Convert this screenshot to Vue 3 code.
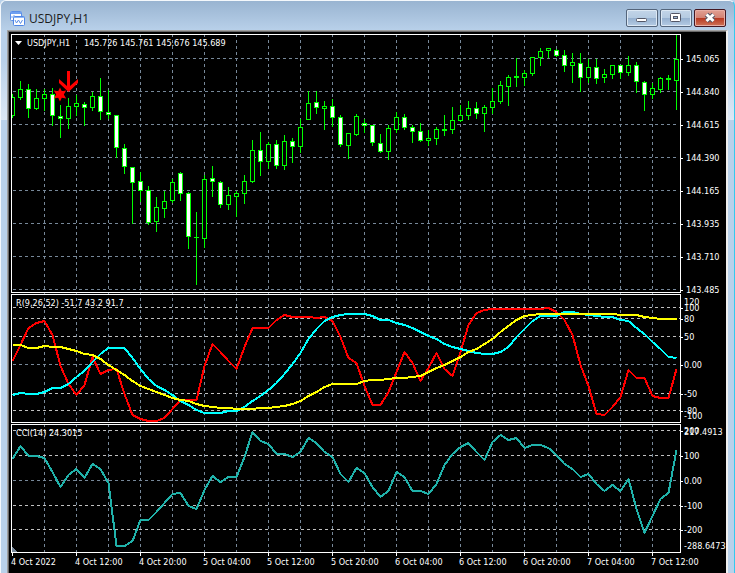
<script setup>
// Each bar: [high, open/close top, open/close bottom, low, falling]
const bars = [
  [94, 97, 115, 117, 0], [81, 89, 97, 99, 0], [84, 89, 108, 117, 1], [89, 98, 108, 109, 0],
  [89, 94, 98, 110, 0], [88, 94, 115, 125, 1], [105, 116, 118, 137, 1], [98, 106, 118, 128, 0],
  [95, 103, 106, 115, 0], [102, 104, 107, 125, 1], [92, 96, 107, 110, 0], [78, 96, 111, 119, 1],
  [90, 112, 114, 118, 1], [115, 115, 147, 157, 1], [144, 148, 166, 173, 1], [167, 167, 182, 223, 1],
  [172, 181, 190, 201, 1], [186, 190, 222, 224, 1], [197, 207, 221, 231, 0], [191, 201, 208, 217, 0],
  [179, 182, 200, 202, 0], [172, 173, 193, 200, 1], [192, 193, 236, 248, 1], [212, 237, 237, 284, 0],
  [175, 179, 238, 247, 0], [166, 178, 181, 196, 1], [181, 182, 204, 207, 1], [187, 195, 204, 209, 0],
  [191, 193, 196, 216, 0], [175, 181, 193, 203, 0], [140, 150, 181, 182, 0], [132, 150, 161, 175, 1],
  [142, 144, 161, 168, 0], [140, 144, 165, 168, 1], [135, 141, 165, 169, 0], [138, 141, 146, 162, 1],
  [119, 127, 146, 152, 0], [91, 103, 119, 119, 0], [91, 102, 107, 113, 1], [101, 106, 108, 129, 0],
  [99, 106, 117, 126, 1], [115, 117, 144, 146, 1], [133, 133, 145, 158, 0], [114, 116, 134, 135, 0],
  [119, 123, 125, 132, 1], [125, 125, 142, 145, 1], [134, 143, 151, 152, 1], [125, 128, 151, 159, 0],
  [112, 117, 129, 132, 0], [114, 117, 127, 129, 1], [125, 127, 131, 142, 1], [123, 131, 140, 141, 1],
  [130, 138, 140, 145, 0], [127, 129, 138, 144, 0], [115, 129, 130, 135, 0], [107, 120, 129, 133, 0],
  [105, 115, 120, 121, 0], [101, 108, 115, 119, 0], [102, 108, 113, 118, 1], [105, 107, 113, 131, 0],
  [88, 101, 107, 113, 0], [81, 85, 101, 103, 0], [75, 77, 86, 105, 0], [58, 76, 77, 86, 0],
  [70, 73, 77, 85, 0], [57, 57, 73, 75, 0], [48, 51, 57, 65, 0], [48, 48, 50, 57, 0],
  [49, 50, 55, 56, 1], [50, 55, 65, 71, 1], [53, 62, 65, 82, 0], [53, 63, 77, 91, 1],
  [59, 67, 77, 82, 0], [59, 67, 78, 83, 1], [69, 74, 77, 82, 0], [65, 65, 74, 78, 0],
  [65, 65, 72, 78, 1], [56, 65, 72, 75, 0], [62, 65, 81, 92, 1], [81, 82, 94, 110, 1],
  [83, 88, 94, 98, 0], [77, 78, 89, 92, 0], [75, 78, 79, 89, 0], [35, 59, 80, 109, 0]
]

const fast = [
  361, 345, 328, 323, 321, 335, 366, 384, 395, 385, 357, 374, 370, 369, 394, 415, 419, 421, 421, 418,
  409, 400, 400, 400, 366, 344, 352, 361, 369, 347, 328, 328, 328, 320, 315, 317, 317, 317, 318, 317,
  321, 337, 358, 363, 386, 405, 405, 392, 372, 352, 363, 381, 368, 353, 369, 376, 352, 325, 313, 310,
  309, 309, 309, 309, 309, 309, 309, 308, 312, 320, 335, 365, 386, 414, 415, 407, 397, 370, 378, 378,
  396, 398, 398, 369
]
const medium = [
  395, 393, 394, 394, 392, 388, 388, 384, 377, 371, 362, 354, 348, 348, 348, 358, 369, 379, 386, 390,
  395, 401, 405, 410, 413, 413, 413, 411, 411, 407, 401, 396, 390, 383, 374, 364, 353, 339, 329, 321,
  317, 315, 314, 314, 314, 316, 320, 320, 323, 325, 328, 332, 336, 339, 344, 347, 349, 351, 353, 354,
  354, 352, 347, 337, 329, 321, 316, 316, 316, 312, 312, 314, 315, 316, 317, 317, 320, 321, 328, 334,
  342, 349, 357, 358
]
const slow = [
  345, 345, 348, 348, 346, 347, 347, 349, 351, 354, 355, 359, 365, 370, 375, 381, 386, 389, 392, 395,
  398, 400, 401, 404, 406, 407, 408, 408, 409, 409, 409, 408, 408, 407, 406, 404, 401, 396, 392, 387,
  384, 384, 384, 384, 381, 380, 380, 379, 378, 378, 377, 376, 372, 368, 365, 361, 357, 352, 349, 344,
  339, 332, 326, 320, 316, 315, 314, 314, 314, 314, 314, 314, 314, 314, 314, 314, 315, 315, 315, 317,
  318, 319, 319, 319
]
const cci = [
  459, 446, 456, 456, 458, 472, 487, 475, 469, 478, 464, 469, 483, 546, 546, 541, 520, 520, 512, 503,
  494, 493, 506, 509, 490, 476, 482, 477, 477, 457, 432, 441, 444, 454, 454, 457, 452, 438, 443, 452,
  457, 474, 482, 468, 473, 487, 497, 491, 472, 477, 491, 491, 494, 484, 465, 454, 447, 443, 452, 460,
  442, 435, 440, 438, 448, 445, 445, 448, 455, 464, 469, 477, 474, 484, 491, 485, 491, 479, 509, 533,
  516, 499, 493, 450
]

const barX = (i) => 12 + i * 8
const points = (series) => series.map((y, i) => `${barX(i) + 0.5},${y}`).join(' ')
const columns = Array.from({ length: 20 }, (_, i) => 44 + i * 32)

// Labels: [y, text, is the end of the scale]
const panes = [
  {
    id: 'price', top: 34, height: 260, frame: 259,
    grid: [58, 91, 124, 157, 190, 223, 256, 289], levels: [], lines: [],
    labels: [
      [58, '145.065'], [91, '144.840'], [124, '144.615'], [157, '144.390'],
      [190, '144.165'], [223, '143.935'], [256, '143.710'], [289, '143.485']
    ]
  },
  {
    id: 'range', top: 294, height: 130, frame: 129, title: 'R(9,26,52) -51.7 43.2 91.7',
    grid: [364], levels: [307, 318, 336, 393, 410],
    lines: [['#ff0000', points(fast)], ['#00ffff', points(medium)], ['#ffff00', points(slow)]],
    labels: [
      [301, '120', true], [307, '100'], [318, '80'], [336, '50'],
      [364, '0.00'], [393, '-50'], [410, '-80'], [415, '-100', true]
    ]
  },
  {
    id: 'cci', top: 424, height: 129, frame: 129, title: 'CCI(14) 24.3015',
    grid: [480], levels: [430, 455, 505, 529],
    lines: [['#20b2aa', points(cci)]],
    labels: [
      [430, '200'], [431, '217.4913', true], [455, '100'], [480, '0.00'],
      [505, '-100'], [529, '-200'], [545, '-288.6473', true]
    ]
  }
]

const times = [
  '4 Oct 2022', '4 Oct 12:00', '4 Oct 20:00', '5 Oct 04:00', '5 Oct 12:00', '5 Oct 20:00',
  '6 Oct 04:00', '6 Oct 12:00', '6 Oct 20:00', '7 Oct 04:00', '7 Oct 12:00'
]

const share = (pane, y) => `${((y + 0.5 - pane.top) / pane.height) * 100}%`
</script>

<template>
  <main class="window">
    <header class="titlebar">
      <svg class="app-icon" width="15" height="15" viewBox="0 0 15 15" aria-hidden="true">
        <rect x="0.5" y="0.5" width="11" height="9" rx="1" fill="#fff" stroke="#5b8fe8" />
        <path d="M1 2h10" stroke="#6fa0f0" stroke-width="2" />
        <path d="M2 7V5M4 6V4" stroke="#6fa0f0" />
        <rect x="3.5" y="5.5" width="11" height="9" rx="1" fill="#fff" stroke="#4f86e6" />
        <path d="M4 6.500h10" stroke="#8db6f6" stroke-width="1" />
        <path d="M5 9l1.500 3 2-3 2 3.500 2-3.500" fill="none" stroke="#5b8fe8" />
      </svg>
      <h1 class="caption">USDJPY,H1</h1>
      <div class="controls">
        <button type="button" class="control" aria-label="Minimize">
          <svg width="28" height="14" viewBox="0 0 28 14">
            <rect x="8.500" y="7.500" width="10" height="3" rx="1" fill="#fff" stroke="#535666" />
          </svg>
        </button>
        <button type="button" class="control" aria-label="Maximize">
          <svg width="28" height="14" viewBox="0 0 28 14">
            <rect x="8.500" y="2.500" width="10" height="8" rx="1" fill="#fff" stroke="#535666" />
            <rect x="11.500" y="5.500" width="4" height="2" fill="#9db8d6" stroke="#535666" />
          </svg>
        </button>
        <button type="button" class="control close" aria-label="Close">
          <svg width="28" height="14" viewBox="0 0 28 14">
            <path d="M10.500 3.500l7 6.500M17.500 3.500l-7 6.500" stroke="#535666" stroke-width="5" />
            <path d="M10.500 3.500l7 6.500M17.500 3.500l-7 6.500" stroke="#fff" stroke-width="3" />
          </svg>
        </button>
      </div>
    </header>

    <div class="client">
      <section v-for="pane in panes" :key="pane.id" class="pane" :class="pane.id">
        <div class="plot">
          <svg
            class="canvas"
            :viewBox="`11 ${pane.top} 670 ${pane.height}`"
            preserveAspectRatio="none"
            shape-rendering="crispEdges"
          >
            <g stroke="#778899" stroke-dasharray="3 3">
              <line
                v-for="x in columns" :key="x" :x1="x + 0.5" :x2="x + 0.5"
                :y1="pane.top - ((pane.top - 34) % 6)" :y2="pane.top + pane.height"
              />
              <line v-for="y in pane.grid" :key="y" x1="13" x2="678" :y1="y + 0.5" :y2="y + 0.5" />
            </g>
            <g stroke="#c0c0c0" stroke-dasharray="3 3">
              <line v-for="y in pane.levels" :key="y" x1="13" x2="680" :y1="y + 0.5" :y2="y + 0.5" />
            </g>

            <template v-if="pane.id === 'price'">
              <g v-for="(b, i) in bars" :key="i">
                <rect :x="barX(i)" :y="b[0]" width="1" :height="b[3] - b[0] + 1" fill="#00ff00" />
                <rect :x="barX(i) - 2" :y="b[1]" width="5" :height="b[2] - b[1] + 1" fill="#00ff00" />
                <rect
                  v-if="b[2] - b[1] > 1" :x="barX(i) - 1" :y="b[1] + 1" width="3"
                  :height="b[2] - b[1] - 1" :fill="b[4] ? '#ffffff' : '#000000'"
                />
              </g>
              <g shape-rendering="auto" fill="#ff0000">
                <path d="M67 71h3v15l8-7v4l-9.500 9L59 83v-4l8 7z" />
                <path d="M60 87.500l1.800 3.700 4.400-.7-2.400 4 2.400 4-4.400-.7-1.800 3.700-1.800-3.700-4.400.7 2.400-4-2.400-4 4.400.7z" />
              </g>
            </template>

            <polyline
              v-for="line in pane.lines" :key="line[0]" :points="line[1]"
              fill="none" :stroke="line[0]" stroke-width="2" stroke-linejoin="round"
            />
            <path v-if="pane.id === 'cci'" d="M12 547l5 5h-5z" fill="#778899" />
            <rect
              x="11.5" :y="pane.top + 0.5" width="669" :height="pane.frame - 1"
              fill="none" stroke="#fff"
            />
          </svg>
          <h2 v-if="pane.title" class="heading">{{ pane.title }}</h2>
          <h2 v-else class="heading quote">
            <svg width="7" height="4" viewBox="0 0 7 4" aria-hidden="true"><path d="M0 0h7L3.500 4z" fill="#fff" /></svg>
            <span class="symbol">USDJPY,H1</span>
            <span>145.726 145.761 145.676 145.689</span>
          </h2>
        </div>
        <div class="axis">
          <span
            v-for="label in pane.labels" :key="label[1]" class="mark" :class="{ bound: label[2] }"
            :style="{ top: share(pane, label[0]) }"
          >{{ label[1] }}</span>
        </div>
      </section>
      <div class="timeline">
        <time v-for="t in times" :key="t" class="time">{{ t }}</time>
      </div>
    </div>
  </main>
</template>

<style>
body {
  margin: 0;
  background: #b9d1ea;
}
</style>

<style scoped>
.window {
  box-sizing: border-box;
  display: flex;
  flex-direction: column;
  min-height: 100vh;
  padding: 0 6px;
  border-top: 1px solid #f4f8fc;
  border-left: 1px solid #f4f8fc;
  border-right: 1px solid #34c9ee;
  border-radius: 6px 6px 0 0;
  background:
    linear-gradient(#99b4d1 0, #b9d1ea 30px, #b9d1ea 60px, #dde8f5 119px, #b9d1ea 119px);
}

.titlebar {
  display: flex;
  align-items: center;
  height: 29px;
  padding: 0 2px 0 3px;
}

.app-icon {
  margin-top: 6px;
}

.caption {
  flex: 1;
  margin: 6px 0 0 4px;
  color: #1c1c1c;
  font: 400 12px/16px "Open Sans", sans-serif;
}

.controls {
  display: flex;
  gap: 2px;
  margin-top: 5px;
}

.control {
  display: flex;
  align-items: center;
  justify-content: center;
  box-sizing: border-box;
  width: 32px;
  height: 18px;
  padding: 0;
  border: 1px solid #54657b;
  border-radius: 2px;
  box-shadow: inset 0 0 0 1px #dce8f4;
  background: linear-gradient(#c3d5e8 0, #b4cae1 50%, #95b0cf 50%, #b5cce4 100%);
}

.close {
  border-color: #431722;
  box-shadow: inset 0 0 0 1px #e8aea5;
  background: linear-gradient(#e2a093 0, #d28173 50%, #b7361f 50%, #cf7458 100%);
}

.client {
  display: flex;
  flex: 1;
  flex-direction: column;
  padding: 2px 0 0 2px;
  border: solid #a0a0a0;
  border-width: 1px 0 0 1px;
  border-right: 2px solid #f0f0f0;
  box-shadow: inset 1px 1px 0 #696969;
  background: #000;
  color: #fff;
  font: 400 9px/12px "DejaVu Sans Condensed", "DejaVu Sans", sans-serif;
}

.pane {
  display: flex;
  min-height: 0;
}

.price {
  flex: 260 0 0;
  margin-top: 1px;
}

.range {
  flex: 130 0 0;
}

.cci {
  flex: 129 0 0;
}

.plot {
  position: relative;
  flex: 1;
  margin-left: 1px;
}

.canvas {
  position: absolute;
  width: 100%;
  height: 100%;
}

.heading {
  position: absolute;
  top: 3px;
  left: 5px;
  margin: 0;
  font: inherit;
  white-space: nowrap;
}

.quote {
  display: flex;
  align-items: center;
  gap: 5px;
  left: 4px;
}

.symbol {
  min-width: 52px;
}

.axis {
  position: relative;
  width: 45px;
}

.mark {
  position: absolute;
  left: 0;
  padding-left: 3px;
  transform: translateY(-50%);
  white-space: nowrap;
}

.price .mark {
  padding-left: 5px;
}

.mark::before {
  position: absolute;
  top: 50%;
  left: 0;
  width: 2px;
  height: 1px;
  background: #fff;
  content: "";
}

.bound::before {
  display: none;
}

.timeline {
  display: grid;
  grid-template-columns: repeat(11, 1fr);
  height: 20px;
  padding: 0 11px 0 1px;
}

.time {
  position: relative;
  min-width: 0;
  padding-top: 3px;
  white-space: nowrap;
}

.time::before {
  position: absolute;
  top: 0;
  left: 1px;
  width: 1px;
  height: 3px;
  background: #fff;
  content: "";
}
</style>
